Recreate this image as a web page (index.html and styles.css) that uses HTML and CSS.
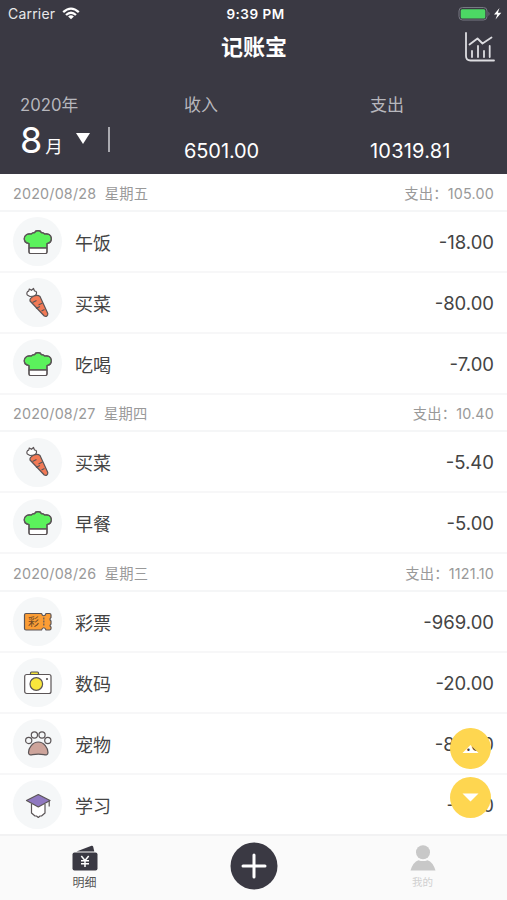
FILE: index.html
```html
<!DOCTYPE html>
<html lang="zh-CN">
<head>
    <meta charset="UTF-8">
    <meta name="viewport" content="width=device-width, initial-scale=1.0">
    <title>记账宝</title>
    <link rel="stylesheet" href="styles.css">
</head>
<body>
    <!-- Icon shapes used more than once -->
    <svg class="defs" width="0" height="0">
        <symbol id="hat" viewBox="0 0 32 32">
            <path d="M7 22V17.500C3.500 17 2 14.500 2.300 12C2.800 8.800 6 7.200 9.200 8C10.200 6.900 11.500 6.600 12.500 6.700C13.500 4 18.500 4 19.500 6.700C20.800 6.500 21.800 7 22.700 8C26 7.200 29 9 29.300 12C29.600 14.500 28.200 17 25 17.500V22Z" fill="#5bf25c"/>
            <path d="M7 22H25V26Q25 27.500 23.500 27.500H8.500Q7 27.500 7 26Z" fill="#fff"/>
            <path d="M7 22V17.500C3.500 17 2 14.500 2.300 12C2.800 8.800 6 7.200 9.200 8C10.200 6.900 11.500 6.600 12.500 6.700C13.500 4 18.500 4 19.500 6.700C20.800 6.500 21.800 7 22.700 8C26 7.200 29 9 29.300 12C29.600 14.500 28.200 17 25 17.500V26Q25 27.500 23.500 27.500H8.500Q7 27.500 7 26ZM7 22H25"/>
        </symbol>
        <symbol id="carrot" viewBox="0 0 32 32">
            <path d="M8 9.500L5.300 8C4.300 6.500 5 4.500 6.700 4.200L7.300 2L9.500 3.300L11.500 1.500L12.500 4C14.500 4 15 5.500 14.200 7.500L12.500 9Z" fill="#fff"/>
            <path d="M8 14C7.300 10.500 14.500 6.500 18 9.500L25.800 26.500C26 28.800 24.300 30 22.300 29Z" fill="#f27a56"/>
            <path d="M10.500 15.500L14.500 13.500M16.500 18L20.500 16M14 21.500L18 19.500M19.500 24L22.500 22.500"/>
        </symbol>
    </svg>

    <!-- Header Section -->
    <header class="header">
        <div class="status">
            <div class="carrier">
                <span>Carrier</span>
                <svg width="18" height="13" viewBox="0 0 18 13" fill="none" stroke="#fff" stroke-width="2.300">
                    <path d="M1.200 5.200Q9 -2 16.800 5.200M4 8Q9 3.500 14 8"/>
                    <path d="M9 12.300L6.100 9.500Q9 7.200 11.900 9.500Z" fill="#fff" stroke="none"/>
                </svg>
            </div>
            <div class="clock">9:39 PM</div>
            <div class="battery">
                <svg width="45" height="16" viewBox="0 0 45 16">
                    <rect x="1" y="1.500" width="28" height="12.500" rx="3.500" fill="none" stroke="#777983"/>
                    <rect x="2.700" y="3.200" width="24.600" height="9.200" rx="1.500" fill="#4cd964"/>
                    <path d="M30.500 5.500Q32.500 7.800 30.500 10Z" fill="#777983"/>
                    <path d="M41.500 2L36 8.500H39.300L37.500 13.500L43.300 6.800H39.900Z" fill="#fff"/>
                </svg>
            </div>
        </div>
        <div class="title-bar">
            <h1>记账宝</h1>
            <svg class="chart" width="32" height="32" viewBox="0 0 32 32">
                <path d="M2 2V25Q2 29.500 6.500 29.500H30M5.500 13.500L13.500 7.500L18.500 12.500L27.500 6.500M8 20V26M14 15V26M20 20V26M25.700 15V26"/>
            </svg>
        </div>
        <div class="summary">
            <div class="month">
                <p class="label">2020年</p>
                <p class="picker"><span class="num">8</span><span class="unit">月</span><i class="arrow"></i><i class="line"></i></p>
            </div>
            <div class="income">
                <p class="label">收入</p>
                <p class="total">6501.00</p>
            </div>
            <div class="expense">
                <p class="label">支出</p>
                <p class="total">10319.81</p>
            </div>
        </div>
    </header>

    <!-- Bill List -->
    <main class="list">
        <section>
            <div class="date"><span>2020/08/28&nbsp; 星期五</span><span>支出：105.00</span></div>
            <div class="item">
                <span class="icon"><svg><use href="#hat"/></svg></span>
                <span class="name">午饭</span><span class="money">-18.00</span>
            </div>
            <div class="item">
                <span class="icon"><svg><use href="#carrot"/></svg></span>
                <span class="name">买菜</span><span class="money">-80.00</span>
            </div>
            <div class="item">
                <span class="icon"><svg><use href="#hat"/></svg></span>
                <span class="name">吃喝</span><span class="money">-7.00</span>
            </div>
        </section>
        <section>
            <div class="date"><span>2020/08/27&nbsp; 星期四</span><span>支出：10.40</span></div>
            <div class="item">
                <span class="icon"><svg><use href="#carrot"/></svg></span>
                <span class="name">买菜</span><span class="money">-5.40</span>
            </div>
            <div class="item">
                <span class="icon"><svg><use href="#hat"/></svg></span>
                <span class="name">早餐</span><span class="money">-5.00</span>
            </div>
        </section>
        <section>
            <div class="date"><span>2020/08/26&nbsp; 星期三</span><span>支出：1121.10</span></div>
            <div class="item">
                <span class="icon">
                    <svg viewBox="0 0 32 32">
                        <path d="M4 7.500H19.500C20.500 10.500 23 10.500 24 7.500H27.500Q29 7.500 29 9V11.500Q27 13 29 15V18Q27 20 29 21V22.500Q29 24 27.500 24H24C23 21 20.500 21 19.500 24H4Q2.500 24 2.500 22.500V9Q2.500 7.500 4 7.500Z" fill="#fb9d35"/>
                        <path d="M21.800 11.500V20" stroke-dasharray="2 1"/>
                        <text class="ticket-text" x="6" y="19.800">彩</text>
                    </svg>
                </span>
                <span class="name">彩票</span><span class="money">-969.00</span>
            </div>
            <div class="item">
                <span class="icon">
                    <svg viewBox="0 0 32 32">
                        <path d="M8.500 8V6Q8.500 5 9.500 5H15.500Q16.500 5 16.500 6V8Z" fill="#f5e63c"/>
                        <rect x="2.700" y="7.500" width="26.300" height="19" rx="2" fill="#fff"/>
                        <circle cx="14.300" cy="17" r="6.300" fill="#f8e63c"/>
                        <circle cx="25" cy="12" r=".5"/>
                    </svg>
                </span>
                <span class="name">数码</span><span class="money">-20.00</span>
            </div>
            <div class="item">
                <span class="icon">
                    <svg viewBox="0 0 32 32">
                        <circle cx="6.700" cy="12.500" r="3.100"/>
                        <circle cx="12.400" cy="7" r="3.100"/>
                        <circle cx="20" cy="7" r="3.100"/>
                        <circle cx="25.800" cy="12.500" r="3.100"/>
                        <path d="M6.500 24.500C6.500 20 10.500 14 16.300 14C22 14 26 20 26 24.500C26 27 24 27.200 22 26.700Q16.300 25.500 10.500 26.700C8.500 27.200 6.500 27 6.500 24.500Z" fill="#cda49b"/>
                    </svg>
                </span>
                <span class="name">宠物</span><span class="money">-80.00</span>
            </div>
            <div class="item">
                <span class="icon">
                    <svg viewBox="0 0 32 32">
                        <path d="M9.500 15V24L13 27H14.500L16.300 28.500L18 27H19.500L23 24V15" fill="#fff"/>
                        <path d="M4.500 11.500L16.300 5.500L28 11.500L16.300 18Z" fill="#8f78c0"/>
                        <path d="M27.200 12V17.500"/>
                    </svg>
                </span>
                <span class="name">学习</span><span class="money">-5.00</span>
            </div>
        </section>
    </main>

    <!-- Floating Scroll Buttons -->
    <div class="float">
        <svg width="41" height="41" viewBox="0 0 41 41">
            <path fill-rule="evenodd" d="M0 20.500a20.500 20.500 0 1 0 41 0a20.500 20.500 0 1 0 -41 0ZM12.500 25H28.500L20.500 17Z" fill="#fed650"/>
        </svg>
        <svg width="41" height="41" viewBox="0 0 41 41">
            <circle cx="20.500" cy="20.500" r="20.500" fill="#fed650"/>
            <path d="M12.500 16.500H28.500L20.500 24.500Z" fill="#fff"/>
        </svg>
    </div>

    <!-- Tab Bar -->
    <footer class="tabs">
        <div class="tab active">
            <svg width="26" height="26" viewBox="0 0 26 26">
                <path d="M4.500 6.500L19.500 .8Q20.800 .5 21.200 1.700L22.300 6.500Z"/>
                <rect x=".5" y="7.500" width="25" height="18" rx="2"/>
                <path d="M9.300 11L13 15.500L16.700 11M13 15.500V22M9 15.700H17M9 18.700H17" fill="none" stroke="#fff" stroke-width="1.500"/>
            </svg>
            <span>明细</span>
        </div>
        <div class="tab">
            <svg width="48" height="48" viewBox="0 0 48 48">
                <circle cx="24" cy="24" r="23.500"/>
                <path d="M24 13V35M13 24H35" stroke="#fff" stroke-width="3" stroke-linecap="round"/>
            </svg>
        </div>
        <div class="tab mine">
            <svg width="26" height="26" viewBox="0 0 26 26">
                <circle cx="13" cy="7.300" r="7"/>
                <path d="M.5 25.500Q3 17 8.500 15.200Q13 17 17.500 15.200Q23 17 25.500 25.500Z"/>
            </svg>
            <span>我的</span>
        </div>
    </footer>
</body>
</html>
```
FILE: styles.css
```css
/* Reset some basic styles for the page */
* {
    box-sizing: border-box;
}

body, h1, p {
    margin: 0;
    padding: 0;
}

body {
    height: 900px;
    display: flex;
    flex-direction: column;
    overflow: hidden;
    background-color: #fff;
    font-family: Inter, "Noto Sans CJK SC", sans-serif;
    color: #444;
}

svg {
    display: block;
    flex: none;
}

.defs {
    position: absolute;
}

/* Header */
.header {
    height: 174px;
    flex: none;
    background-color: #3a3943;
    color: #fff;
}

.status {
    height: 27px;
    display: grid;
    grid-template-columns: 1fr 1fr 1fr;
    align-items: center;
    padding: 0 4px 0 8px;
    font-size: 14px;
}

.carrier {
    display: flex;
    align-items: center;
    gap: 7px;
    letter-spacing: 0.2px;
    color: #e8e8ea;
}

.clock {
    text-align: center;
    font-weight: 600;
    font-size: 13.5px;
    letter-spacing: 0.5px;
}

.battery {
    justify-self: end;
}

.title-bar {
    height: 40px;
    display: grid;
    grid-template-columns: 1fr auto 1fr;
    align-items: center;
    padding: 0 11px 0 12px;
}

.title-bar h1 {
    grid-column: 2;
    font-size: 22px;
    line-height: 40px;
    font-weight: 700;
}

.chart {
    justify-self: end;
    fill: none;
    stroke: #dddde1;
    stroke-width: 1.8;
    stroke-linecap: round;
    stroke-linejoin: round;
}

.summary {
    display: grid;
    grid-template-columns: 164px 186px 1fr;
    padding: 27px 0 0 20px;
}

.label {
    font-size: 17px;
    line-height: 23px;
    color: #b7b7bd;
}

.month .label {
    font-size: 16.7px;
}

.total {
    margin-top: 21px;
    font-size: 20px;
    line-height: 26px;
}

.income .total {
    letter-spacing: -0.1px;
}

.expense .total {
    letter-spacing: 0.2px;
}

.picker {
    display: flex;
    align-items: baseline;
    height: 46px;
}

.num {
    font-size: 36px;
    line-height: 46px;
}

.unit {
    margin-left: 3px;
    font-size: 17.5px;
}

.arrow {
    align-self: flex-start;
    margin: 16px 0 0 13px;
    border: 7px solid transparent;
    border-top: 11px solid #fff;
    border-bottom: 0;
}

.line {
    align-self: flex-start;
    margin: 10px 0 0 18px;
    width: 2px;
    height: 25px;
    background-color: #aaaab0;
}

/* Bill list */
.list {
    height: 660px;
    flex: none;
    overflow: hidden;
}

.date {
    height: 37.5px;
    display: flex;
    justify-content: space-between;
    align-items: center;
    padding: 1px 13px 0;
    border-bottom: 2px solid #f5f6f7;
    font-size: 14.3px;
    letter-spacing: 0.2px;
    color: #999;
}

.item {
    height: 61px;
    display: flex;
    align-items: center;
    padding: 1px 13px 0;
    border-bottom: 2px solid #f7f7f8;
    font-size: 18px;
}

.icon {
    width: 49px;
    height: 49px;
    display: flex;
    align-items: center;
    justify-content: center;
    border-radius: 50%;
    background-color: #f5f7f8;
}

.icon svg {
    width: 32px;
    height: 32px;
    fill: none;
    stroke: #5b5557;
    stroke-width: 1.2;
    stroke-linejoin: round;
}

.ticket-text {
    font-size: 11px;
    fill: #6d4825;
    stroke: none;
}

.name {
    flex: 1;
    margin-left: 13px;
}

.money {
    font-size: 18.5px;
}

/* Scroll buttons over the list */
.float {
    position: absolute;
    right: 16px;
    top: 728px;
    display: grid;
    gap: 8px;
}

/* Tab bar */
.tabs {
    flex: 1;
    display: grid;
    grid-template-columns: 1fr 1fr 1fr;
    background-color: #fafafa;
    border-top: 2px solid #f2f2f3;
}

.tab {
    display: flex;
    flex-direction: column;
    align-items: center;
    padding-top: 6px;
    font-size: 12px;
    line-height: 18px;
    fill: #3a3943;
    color: #555;
}

.active, .mine {
    padding-top: 9px;
    gap: 3px;
}

.mine {
    fill: #c8c8c8;
    color: #d0d0d0;
    font-size: 10.5px;
}
```
